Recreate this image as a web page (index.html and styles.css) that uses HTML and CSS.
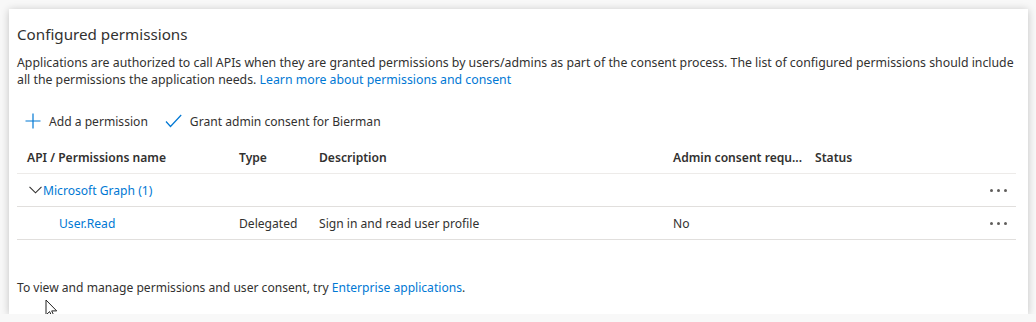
FILE: index.html
```html
<!DOCTYPE html>
<html lang="en">
<head>
  <meta charset="UTF-8">
  <title>Configured permissions</title>
  <link rel="stylesheet" href="styles.css">
</head>
<body>
<div class="card">
  <h2>Configured permissions</h2>
  <p class="intro">Applications are authorized to call APIs when they are granted permissions by users/admins as part of the consent process. The list of configured permissions should include all the permissions the application needs. <a href="#">Learn more about permissions and consent</a></p>

  <!-- command bar -->
  <div class="toolbar">
    <span class="cmd">
      <svg width="16" height="16" viewBox="0 0 16 16"><path d="M8 0.5v15M0.5 8h15" stroke="#0078d4" stroke-width="1.2" fill="none"/></svg>
      Add a permission
    </span>
    <span class="cmd">
      <svg width="17" height="14" viewBox="0 0 17 14"><path d="M1 7.5l4.5 5L16.2 1" stroke="#0078d4" stroke-width="1.2" fill="none"/></svg>
      Grant admin consent for Bierman
    </span>
  </div>

  <div class="perm-table">
    <div class="row head">
      <div>API / Permissions name</div>
      <div>Type</div>
      <div>Description</div>
      <div>Admin consent requ...</div>
      <div>Status</div>
      <div></div>
    </div>
    <div class="row group">
      <div class="group-name">
        <svg width="13" height="8" viewBox="0 0 13 8"><path d="M0.5 0.8l6 6 6-6" stroke="#323130" stroke-width="1.1" fill="none"/></svg>
        <a href="#">Microsoft Graph (1)</a>
      </div>
      <div></div><div></div><div></div><div></div>
      <div class="more"><i></i><i></i><i></i></div>
    </div>
    <div class="row">
      <div class="perm-name"><a href="#">User.Read</a></div>
      <div>Delegated</div>
      <div>Sign in and read user profile</div>
      <div>No</div>
      <div></div>
      <div class="more"><i></i><i></i><i></i></div>
    </div>
  </div>

  <p class="footer">To view and manage permissions and user consent, try <a href="#">Enterprise applications</a>.</p>

  <svg class="cursor" width="13" height="19" viewBox="0 0 13 19"><path d="M1 1v15l3.6-3.4 2.6 5.6 2-0.9-2.5-5.4h5z" fill="#fff" stroke="#222" stroke-width="1"/></svg>
</div>
</body>
</html>
```

FILE: styles.css
```css
body {
  margin: 0;
  background: #f8f8f8;
  font-family: 'Segoe UI', 'Noto Sans', sans-serif;
  font-size: 12.1px;
  color: #323130;
}

a {
  color: #0078d4;
  text-decoration: none;
}

.card {
  position: relative;
  margin: 9px 0 0 9px;
  width: 1019px;
  height: 305px;
  box-sizing: border-box;
  padding: 13px 12px 0 8px;
  background: #ffffff;
  box-shadow: 0 1px 8px rgba(0, 0, 0, 0.22);
  overflow: hidden;
}

h2 {
  margin: 0;
  font-size: 15.2px;
  font-weight: 400;
  line-height: 24px;
}

.intro {
  max-width: 997px;
  margin: 8px 0 0;
  font-size: 12.3px;
  line-height: 17px;
}

.toolbar {
  display: flex;
  align-items: center;
  gap: 17px;
  height: 32px;
  margin-top: 17px;
  padding-left: 8px;
}

.cmd {
  display: flex;
  align-items: center;
  gap: 8px;
}

.perm-table {
  margin-top: 4px;
}

.row {
  display: grid;
  grid-template-columns: 212px 80px 354px 142px 1fr 30px;
  align-items: center;
  height: 32px;
  padding-left: 10px;
  border-bottom: 1px solid #e1dfdd;
}

.row.head {
  font-weight: 600;
  border-bottom-color: #edebe9;
}

.group-name {
  display: flex;
  align-items: center;
  gap: 1px;
  margin-left: 2px;
}

.perm-name {
  padding-left: 32px;
}

.more {
  display: flex;
  gap: 4px;
  padding-left: 4px;
}

.more i {
  width: 3px;
  height: 3px;
  border-radius: 50%;
  background: #605e5c;
}

.footer {
  margin: 39px 0 0;
  line-height: 17px;
}

.cursor {
  position: absolute;
  left: 36px;
  top: 290px;
}
```
